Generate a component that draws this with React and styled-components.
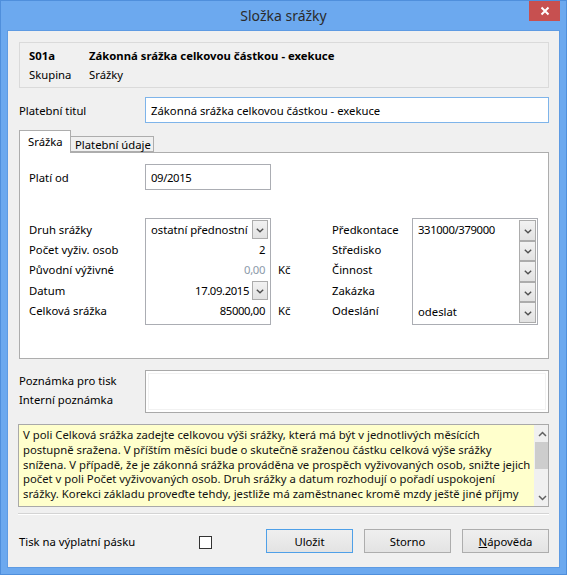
import React from "react";
import styled, { createGlobalStyle } from "styled-components";

const Global = createGlobalStyle`
  html, body { margin: 0; padding: 0; background: #fff; }
  body { font-family: "Noto Sans", "Open Sans", sans-serif; font-size: 11.3px; color: #000; }
  * { box-sizing: border-box; }
`;

const Window = styled.div`
  width: 567px;
  height: 575px;
  background: #6ca9ef;
  border: 1px solid #4f8fdc;
  display: flex;
  flex-direction: column;
  padding: 0 6px 6px 6px;
`;

const TitleBar = styled.div`
  height: 29px;
  display: grid;
  grid-template-columns: 40px 1fr 40px;
  align-items: start;
`;

const Title = styled.div`
  grid-column: 2;
  text-align: center;
  font-size: 14px;
  line-height: 29px;
  color: #2b2b2b;
`;

const CloseBtn = styled.div`
  grid-column: 3;
  justify-self: end;
  width: 31px;
  height: 20px;
  background: #c75050;
  display: flex;
  align-items: center;
  justify-content: center;
`;

const Content = styled.div`
  flex: 1;
  background: #f0f0f0;
  border: 1px solid #5e9be3;
  padding: 11px 10px 0 11px;
  display: flex;
  flex-direction: column;
`;

const HeaderBox = styled.div`
  height: 46px;
  border: 1px solid #dadada;
  padding: 3px 9px;
  display: grid;
  grid-template-columns: 60px 1fr;
  grid-auto-rows: 19px;
  align-items: center;
`;

const HText = styled.div`
  font-weight: ${(p) => (p.$bold ? 700 : 400)};
  white-space: nowrap;
`;

const FieldRow = styled.div`
  display: flex;
  align-items: center;
  margin-top: ${(p) => p.$mt || 0}px;
`;

const Label = styled.div`
  width: ${(p) => p.$w}px;
  flex: none;
  white-space: nowrap;
`;

const TextInput = styled.div`
  width: ${(p) => p.$w}px;
  height: 26px;
  border: 1px solid ${(p) => (p.$focus ? "#7eb4ea" : "#abadb3")};
  background: #fff;
  padding: 0 5px;
  display: flex;
  align-items: center;
  white-space: nowrap;
  letter-spacing: ${(p) => (p.$num ? "-0.38px" : "normal")};
`;

const Tabs = styled.div`
  display: flex;
  align-items: flex-end;
  margin-top: 7px;
  height: 22px;
  position: relative;
  z-index: 1;
`;

const Tab = styled.div`
  width: ${(p) => p.$w}px;
  height: ${(p) => (p.$active ? 23 : 16)}px;
  margin-bottom: ${(p) => (p.$active ? -1 : 0)}px;
  padding: 0 0 ${(p) => (p.$active ? 2 : 0)}px ${(p) => (p.$active ? 8 : 4)}px;
  border: 1px solid #adadad;
  border-bottom: ${(p) => (p.$active ? "none" : "1px solid #adadad")};
  border-left: ${(p) => (p.$noLeft ? "none" : "1px solid #adadad")};
  background: ${(p) => (p.$active ? "#fff" : "#f0f0f0")};
  display: flex;
  align-items: center;
  white-space: nowrap;
`;

const Panel = styled.div`
  height: 207px;
  background: #fff;
  border: 1px solid #adadad;
  padding: 11px 10px 0 9px;
  display: flex;
  flex-direction: column;
`;

const FormArea = styled.div`
  display: flex;
  margin-top: 28px;
`;

const LabelCol = styled.div`
  width: ${(p) => p.$w}px;
  flex: none;
  padding-top: 1px;
  display: flex;
  flex-direction: column;
`;

const LRow = styled.div`
  height: 20.3px;
  display: flex;
  align-items: center;
  white-space: nowrap;
  padding-left: ${(p) => p.$pl || 0}px;
  letter-spacing: ${(p) => (p.$num ? "-0.38px" : "normal")};
`;

const Box = styled.div`
  width: 126px;
  height: 107px;
  flex: none;
  border: 1px solid #abadb3;
  background: #fff;
  display: flex;
  flex-direction: column;
`;

const BoxRow = styled.div`
  height: 20.3px;
  display: flex;
  align-items: center;
  justify-content: ${(p) => (p.$left ? "space-between" : "flex-end")};
  padding-left: ${(p) => (p.$left ? 5 : 0)}px;
  padding-right: ${(p) => (p.$btn ? 2 : 5)}px;
  color: ${(p) => (p.$dim ? "#8c9aaa" : "#000")};
  white-space: nowrap;
`;

const Num = styled.span`
  letter-spacing: -0.38px;
`;

const ValText = styled.span`
  letter-spacing: -0.05px;
`;

const DropBtn = styled.div`
  width: ${(p) => p.$w || 16}px;
  height: ${(p) => (p.$fill ? "auto" : "19px")};
  flex: ${(p) => (p.$fill ? 1 : "none")};
  margin-left: ${(p) => p.$ml || 0}px;
  border: 1px solid #acacac;
  background: linear-gradient(#f2f2f2, #e2e2e2);
  display: flex;
  align-items: center;
  justify-content: center;
  padding-top: 2px;
`;

const RightBoxInner = styled.div`
  display: flex;
  flex: 1;
  padding: 1px 1px 1px 0;
`;

const RightValues = styled.div`
  flex: 1;
  display: flex;
  flex-direction: column;
  padding-left: 5px;
  margin-top: -1px;
`;

const ButtonStack = styled.div`
  width: 17px;
  display: flex;
  flex-direction: column;
`;

const NotesRow = styled.div`
  display: flex;
  margin-top: 11px;
`;

const NotesLabels = styled.div`
  width: 126px;
  flex: none;
  display: flex;
  flex-direction: column;
  padding-top: 1px;
`;

const NLabel = styled.div`
  height: 19px;
  display: flex;
  align-items: center;
  white-space: nowrap;
`;

const NotesBox = styled.div`
  flex: 1;
  height: 43px;
  border: 1px solid #a9a9a9;
  background: #fff;
  box-shadow: inset 0 0 0 2px #fff, inset 0 0 0 3px #f2f2f2;
`;

const HelpBox = styled.div`
  margin: 11px 0 0 -1px;
  height: 83px;
  border: 1px solid #a9a9a9;
  background: #ffffcc;
  display: flex;
  overflow: hidden;
`;

const HelpText = styled.div`
  flex: 1;
  margin-top: 3px;
  padding: 0 4px;
  line-height: 14.8px;
  color: #111;
`;

const HelpLine = styled.div`
  white-space: nowrap;
`;

const ScrollBar = styled.div`
  width: 17px;
  flex: none;
  background: #f0f0f0;
  display: flex;
  flex-direction: column;
`;

const ScrollArrow = styled.div`
  height: 17px;
  flex: none;
  display: flex;
  align-items: center;
  justify-content: center;
`;

const ScrollThumb = styled.div`
  height: 27px;
  flex: none;
  margin: 0 1px;
  background: #cdcdcd;
`;

const ScrollTrack = styled.div`
  flex: 1;
`;

const Separator = styled.div`
  margin: 6px 0 0 -1px;
  height: 2px;
  border-top: 1px solid #d4d4d4;
  border-bottom: 1px solid #fff;
`;

const BottomRow = styled.div`
  display: flex;
  align-items: center;
  margin-top: 14px;
`;

const Checkbox = styled.div`
  width: 13px;
  height: 13px;
  margin-top: 2px;
  border: 1px solid #333;
  background: #fff;
  flex: none;
`;

const ButtonGroup = styled.div`
  display: flex;
  gap: 11px;
  margin-left: 54px;
`;

const Button = styled.div`
  width: 87px;
  height: 24px;
  border: 1px solid ${(p) => (p.$default ? "#4fa0e8" : "#adadad")};
  background: linear-gradient(#efefef, #e3e3e3);
  display: flex;
  align-items: center;
  justify-content: center;
  flex: none;
`;

const U = styled.span`
  text-decoration: underline;
`;

const Chevron = () => (
  <svg width="8" height="5" viewBox="0 0 8 5">
    <polyline points="0.8,0.8 4,3.8 7.2,0.8" fill="none" stroke="#505050" strokeWidth="1.4" />
  </svg>
);

const ArrowUp = () => (
  <svg width="9" height="6" viewBox="0 0 9 6">
    <polyline points="1,5 4.5,1.5 8,5" fill="none" stroke="#606060" strokeWidth="1.5" />
  </svg>
);

const ArrowDown = () => (
  <svg width="9" height="6" viewBox="0 0 9 6">
    <polyline points="1,1 4.5,4.5 8,1" fill="none" stroke="#606060" strokeWidth="1.5" />
  </svg>
);

const CloseX = () => (
  <svg width="10" height="10" viewBox="0 0 10 10">
    <path d="M1.5 1.5 L8.5 8.5 M8.5 1.5 L1.5 8.5" stroke="#fff" strokeWidth="2" />
  </svg>
);

const helpLines = [
  "V poli Celková srážka zadejte celkovou výši srážky, která má být v jednotlivých měsících",
  "postupně sražena. V příštím měsíci bude o skutečně sraženou částku celková výše srážky",
  "snížena. V případě, že je zákonná srážka prováděna ve prospěch vyživovaných osob, snižte jejich",
  "počet v poli Počet vyživovaných osob. Druh srážky a datum rozhodují o pořadí uspokojení",
  "srážky. Korekci základu proveďte tehdy, jestliže má zaměstnanec kromě mzdy ještě jiné příjmy",
];

export default function App() {
  return (
    <>
      <Global />
      <Window>
        <TitleBar>
          <Title>Složka srážky</Title>
          <CloseBtn>
            <CloseX />
          </CloseBtn>
        </TitleBar>
        <Content>
          <HeaderBox>
            <HText $bold>S01a</HText>
            <HText $bold>Zákonná srážka celkovou částkou - exekuce</HText>
            <HText>Skupina</HText>
            <HText>Srážky</HText>
          </HeaderBox>

          <FieldRow $mt={9}>
            <Label $w={126}>Platební titul</Label>
            <TextInput $w={404} $focus>
              Zákonná srážka celkovou částkou - exekuce
            </TextInput>
          </FieldRow>

          <Tabs>
            <Tab $active $w={52}>Srážka</Tab>
            <Tab $w={83} $noLeft>Platební údaje</Tab>
          </Tabs>
          <Panel>
            <FieldRow>
              <Label $w={116}>Platí od</Label>
              <TextInput $w={126} $num>09/2015</TextInput>
            </FieldRow>

            <FormArea>
              <LabelCol $w={116}>
                <LRow>Druh srážky</LRow>
                <LRow>Počet vyživ. osob</LRow>
                <LRow>Původní výživné</LRow>
                <LRow>Datum</LRow>
                <LRow>Celková srážka</LRow>
              </LabelCol>
              <Box>
                <BoxRow $left $btn style={{ paddingTop: 1 }}>
                  <ValText>ostatní přednostní</ValText>
                  <DropBtn>
                    <Chevron />
                  </DropBtn>
                </BoxRow>
                <BoxRow><Num>2</Num></BoxRow>
                <BoxRow $dim><Num>0,00</Num></BoxRow>
                <BoxRow $btn>
                  <Num>17.09.2015</Num>
                  <DropBtn $ml={3}>
                    <Chevron />
                  </DropBtn>
                </BoxRow>
                <BoxRow><Num>85000,00</Num></BoxRow>
              </Box>
              <LabelCol $w={61}>
                <LRow />
                <LRow />
                <LRow $pl={7}>Kč</LRow>
                <LRow />
                <LRow $pl={7}>Kč</LRow>
              </LabelCol>
              <LabelCol $w={80}>
                <LRow>Předkontace</LRow>
                <LRow>Středisko</LRow>
                <LRow>Činnost</LRow>
                <LRow>Zakázka</LRow>
                <LRow>Odeslání</LRow>
              </LabelCol>
              <Box>
                <RightBoxInner>
                  <RightValues>
                    <LRow $num>331000/379000</LRow>
                    <LRow />
                    <LRow />
                    <LRow />
                    <LRow style={{ paddingTop: 3 }}>odeslat</LRow>
                  </RightValues>
                  <ButtonStack>
                    <DropBtn $w={17} $fill><Chevron /></DropBtn>
                    <DropBtn $w={17} $fill><Chevron /></DropBtn>
                    <DropBtn $w={17} $fill><Chevron /></DropBtn>
                    <DropBtn $w={17} $fill><Chevron /></DropBtn>
                    <DropBtn $w={17} $fill><Chevron /></DropBtn>
                  </ButtonStack>
                </RightBoxInner>
              </Box>
            </FormArea>
          </Panel>

          <NotesRow>
            <NotesLabels>
              <NLabel>Poznámka pro tisk</NLabel>
              <NLabel>Interní poznámka</NLabel>
            </NotesLabels>
            <NotesBox />
          </NotesRow>

          <HelpBox>
            <HelpText>
              {helpLines.map((l, i) => (
                <HelpLine key={i}>{l}</HelpLine>
              ))}
            </HelpText>
            <ScrollBar>
              <ScrollArrow><ArrowUp /></ScrollArrow>
              <ScrollThumb />
              <ScrollTrack />
              <ScrollArrow><ArrowDown /></ScrollArrow>
            </ScrollBar>
          </HelpBox>

          <Separator />

          <BottomRow>
            <Label $w={180}>Tisk na výplatní pásku</Label>
            <Checkbox />
            <ButtonGroup>
              <Button $default>Uložit</Button>
              <Button>Storno</Button>
              <Button>
                <span><U>N</U>ápověda</span>
              </Button>
            </ButtonGroup>
          </BottomRow>
        </Content>
      </Window>
    </>
  );
}
